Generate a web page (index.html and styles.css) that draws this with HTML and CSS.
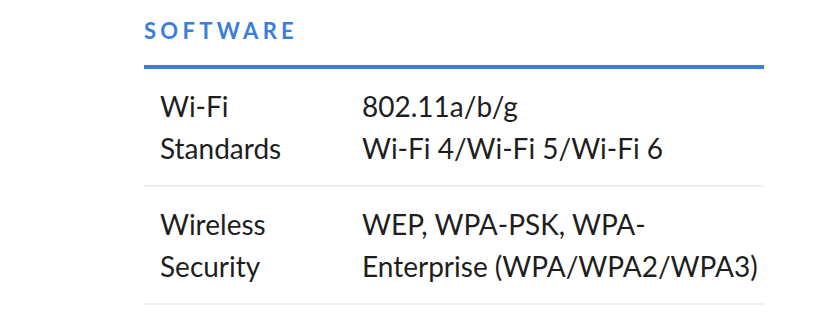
FILE: index.html
```html
<!DOCTYPE html>
<html lang="en">
<head>
<meta charset="utf-8">
<title>Software specifications</title>
<link rel="stylesheet" href="styles.css">
</head>
<body>
  <section class="spec">
    <h2 class="spec-title">SOFTWARE</h2>
    <div class="spec-table">
      <div class="spec-row">
        <div class="spec-label">Wi-Fi Standards</div>
        <div class="spec-value">802.11a/b/g<br>Wi-Fi 4/Wi-Fi 5/Wi-Fi 6</div>
      </div>
      <div class="spec-row">
        <div class="spec-label">Wireless Security</div>
        <div class="spec-value">WEP, WPA-PSK, WPA-<wbr>Enterprise&nbsp;(WPA/WPA2/WPA3)</div>
      </div>
    </div>
  </section>
</body>
</html>
```

FILE: styles.css
```css
html, body {
  margin: 0;
  background: #ffffff;
}

body {
  font-family: Lato, "Open Sans", sans-serif;
  color: #1e1e1e;
}

.spec {
  width: 620px;
  margin-left: 144px;
  padding-top: 18px;
}

.spec-title {
  margin: 0 0 22px;
  font-size: 22px;
  line-height: 25px;
  font-weight: 700;
  letter-spacing: 4.3px;
  color: #3b7ddd;
}

.spec-table {
  border-top: 4px solid #3b7ddd;
}

.spec-row {
  display: grid;
  grid-template-columns: 218px 1fr;
  padding: 16px 0;
  border-bottom: 2px solid #efefef;
  font-size: 28px;
  line-height: 42px;
}

.spec-label {
  padding: 0 40px 0 16px;
}
```
